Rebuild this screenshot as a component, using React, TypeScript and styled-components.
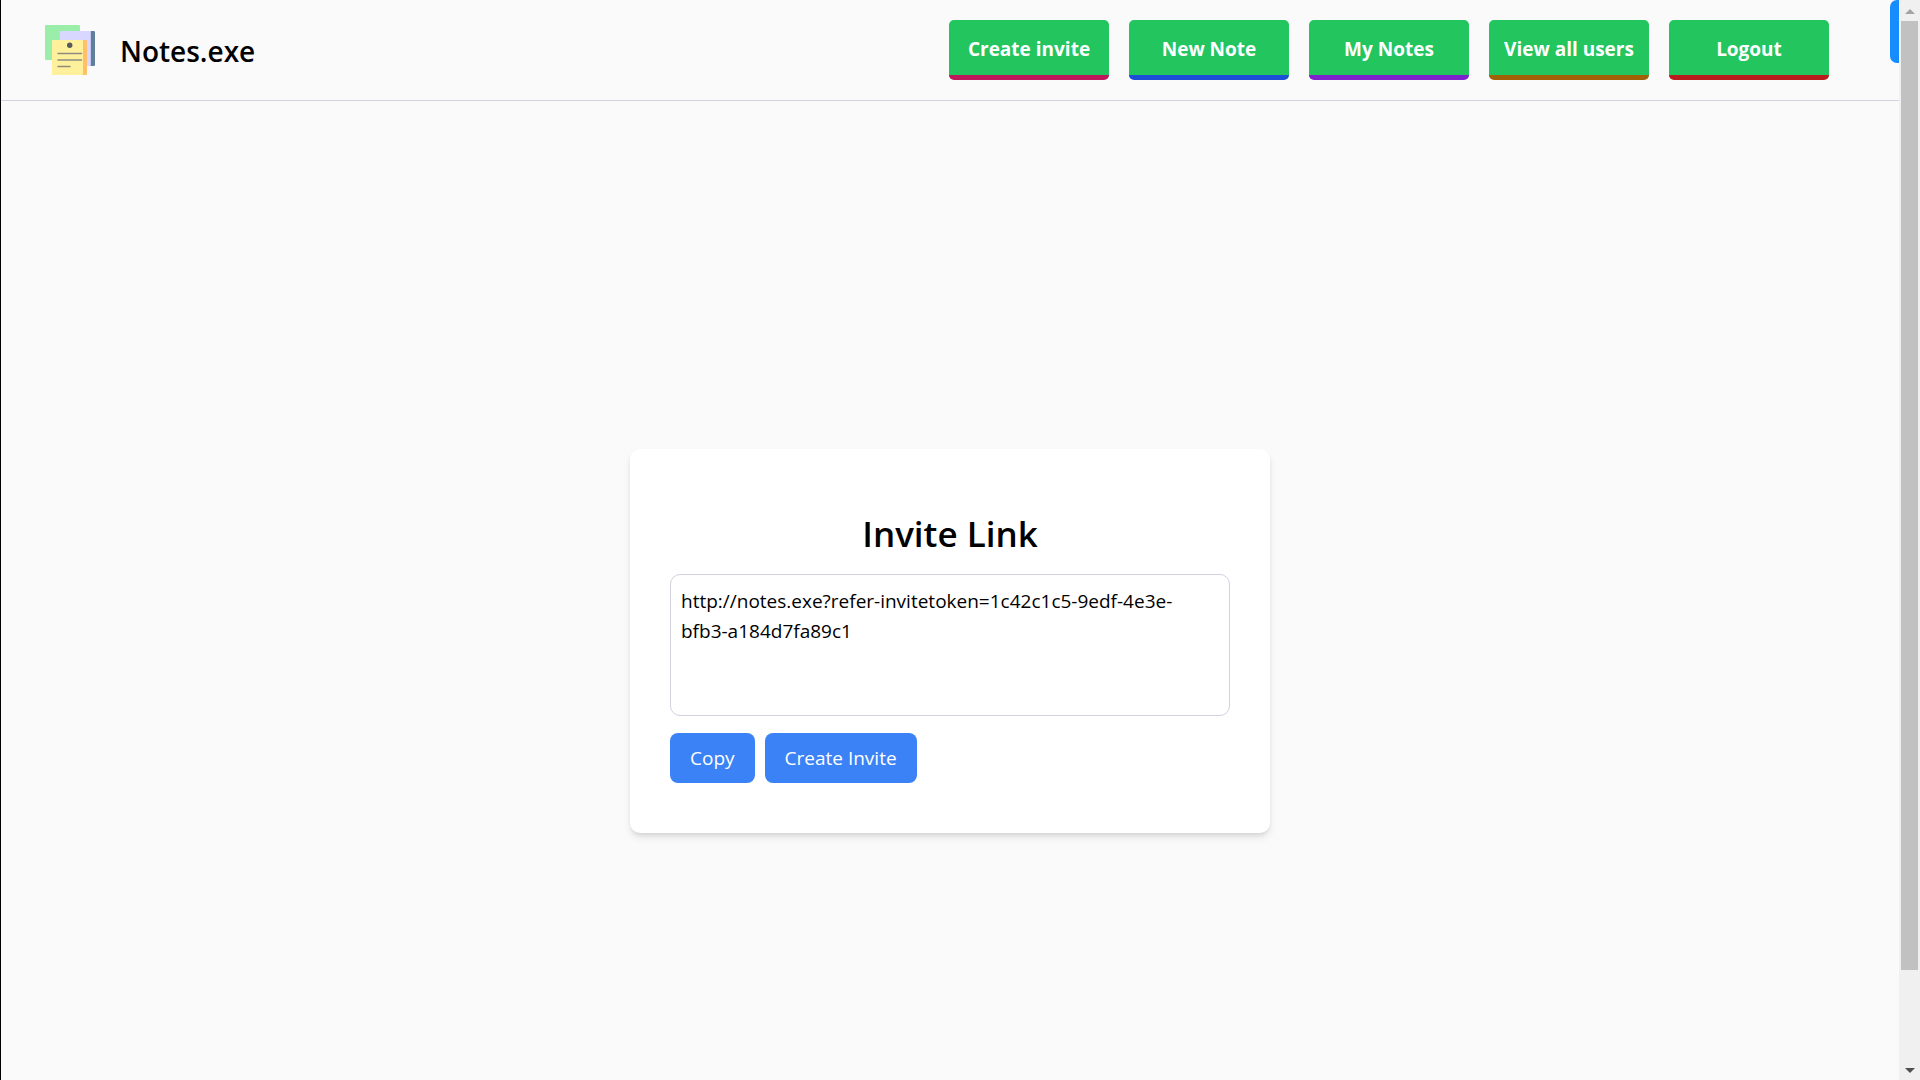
import React, { useState } from "react";
import styled, { createGlobalStyle } from "styled-components";

const GlobalStyle = createGlobalStyle`
  *, *::before, *::after { box-sizing: border-box; }
  body {
    margin: 0;
    background: #fafafa;
    color: #000;
    font-family: "Open Sans", "Noto Sans", sans-serif;
    font-size: 19px;
    line-height: 30px;
  }
  button, textarea { font: inherit; }
`;

const Frame = styled.div`
  display: flex;
  height: 100vh;
  overflow: hidden;
`;

const Page = styled.div`
  flex: 1;
  min-width: 0;
  overflow: hidden;
  border-left: 1px solid #000;
`;

const Header = styled.header`
  display: flex;
  align-items: flex-start;
  border-bottom: 1px solid #d1d3e0;
`;

const TopBar = styled.div`
  flex: 1;
  display: flex;
  align-items: center;
  justify-content: space-between;
  padding: 20px 61px 20px 44px;
`;

const Brand = styled.a`
  display: flex;
  align-items: center;
  gap: 25px;
  color: inherit;
  text-decoration: none;
  font-size: 28px;
  font-weight: 600;
  line-height: 40px;
`;

const BrandName = styled.span`
  padding-top: 2px;
`;

const Nav = styled.nav`
  display: flex;
  gap: 20px;
`;

const NavButton = styled.button<{ $edge: string }>`
  width: 160px;
  height: 60px;
  padding: 2px 0 0;
  border: 0;
  border-bottom: 5px solid ${(p) => p.$edge};
  border-radius: 5px;
  background: #22c55e;
  color: #fff;
  font-size: 19px;
  font-weight: 700;
  white-space: nowrap;
  cursor: pointer;
`;

const SideTab = styled.button`
  width: 9px;
  height: 63px;
  margin-bottom: -63px;
  padding: 0;
  border: 0;
  border-radius: 7px 0 0 7px;
  background: #168cff;
  cursor: pointer;
`;

const Main = styled.main`
  display: flex;
  align-items: center;
  justify-content: center;
  min-height: 100vh;
`;

const Card = styled.section`
  display: flex;
  flex-direction: column;
  width: 640px;
  padding: 60px 40px 50px;
  border-radius: 10px;
  background: #fff;
  box-shadow: 0 5px 8px -1px rgba(0, 0, 0, 0.1), 0 3px 5px -2px rgba(0, 0, 0, 0.1);
`;

const Title = styled.label`
  margin-bottom: 15px;
  font-size: 35px;
  font-weight: 600;
  line-height: 50px;
  text-align: center;
`;

const LinkBox = styled.textarea`
  display: block;
  width: 100%;
  height: 142px;
  margin: 0 0 17px;
  padding: 11px 30px 11px 10px;
  border: 1px solid #d1d3e0;
  border-radius: 10px;
  background: #fff;
  color: #000;
  resize: none;
  outline: none;
`;

const Actions = styled.div`
  display: flex;
  gap: 10px;
`;

const ActionButton = styled.button`
  padding: 10px 20px;
  border: 0;
  border-radius: 8px;
  background: #3b82f6;
  color: #fff;
  cursor: pointer;
`;

const ScrollBar = styled.aside`
  display: flex;
  flex-direction: column;
  width: 21px;
  padding: 0 2px;
  background: #f0f0f0;
`;

const Arrow = styled.button<{ $color: string }>`
  display: flex;
  align-items: center;
  justify-content: center;
  height: 21px;
  padding: 2px 0 0;
  border: 0;
  background: none;
  color: ${(p) => p.$color};
`;

const Thumb = styled.div`
  flex: 949;
  background: #c1c1c1;
`;

const Rest = styled.div`
  flex: 89;
`;

const Logo = () => (
  <svg width="50" height="50" viewBox="0 0 50 50" aria-hidden="true">
    <rect width="35" height="35" rx="1.3" fill="#9aeeaa" />
    <path d="M16.3 6H47v35H16.3A1.3 1.3 0 0 1 15 39.700V7.300A1.300 1.300 0 0 1 16.300 6Z" fill="#d8d7ff" />
    <path d="M46 6h2.700A1.300 1.300 0 0 1 50 7.300v32.400a1.300 1.300 0 0 1-1.300 1.300H45c.8-.4 1-1 1-2Z" fill="#5e7f99" />
    <path d="M45 41c.8-.4 1-1 1-2V7.500C46 6.700 45.700 6.300 45 6Z" fill="#c4c3f3" />
    <rect x="7" y="15" width="34" height="35" rx="1.300" fill="#fff19c" />
    <path d="M38 15h2.700A1.300 1.300 0 0 1 42 16.300v32.400a1.300 1.300 0 0 1-1.300 1.300H37c.8-.4 1-1 1-2Z" fill="#ffc166" />
    <circle cx="24.700" cy="20.300" r="2.700" fill="#555a5c" />
    <path d="M13 28.400h23.500M13 35.100h23.500M13 41.500h12" stroke="#8c8b80" strokeWidth="1.500" strokeLinecap="round" />
  </svg>
);

const NAV_ITEMS = [
  { label: "Create invite", edge: "#be185d" },
  { label: "New Note", edge: "#1d4ed8" },
  { label: "My Notes", edge: "#7e22ce" },
  { label: "View all users", edge: "#a16207" },
  { label: "Logout", edge: "#b91c1c" },
];

export default function App() {
  const [link, setLink] = useState("http://notes.exe?refer-invitetoken=1c42c1c5-9edf-4e3e-bfb3-a184d7fa89c1");

  return (
    <Frame>
      <GlobalStyle />
      <Page>
        <Header>
          <TopBar>
            <Brand href="#">
              <Logo />
              <BrandName>Notes.exe</BrandName>
            </Brand>
            <Nav>
              {NAV_ITEMS.map((item) => (
                <NavButton key={item.label} type="button" $edge={item.edge}>
                  {item.label}
                </NavButton>
              ))}
            </Nav>
          </TopBar>
          <SideTab type="button" aria-label="Open panel" />
        </Header>
        <Main>
          <Card>
            <Title htmlFor="invite-link">Invite Link</Title>
            <LinkBox
              id="invite-link"
              spellCheck={false}
              value={link}
              onChange={(event) => setLink(event.target.value)}
            />
            <Actions>
              <ActionButton type="button">Copy</ActionButton>
              <ActionButton type="button">Create Invite</ActionButton>
            </Actions>
          </Card>
        </Main>
      </Page>
      <ScrollBar>
        <Arrow type="button" aria-label="Scroll up" $color="#a3a3a3">
          <svg width="10" height="5" viewBox="0 0 10 5">
            <path d="M0 5 5 0l5 5Z" fill="currentColor" />
          </svg>
        </Arrow>
        <Thumb />
        <Rest />
        <Arrow type="button" aria-label="Scroll down" $color="#505050">
          <svg width="10" height="5" viewBox="0 0 10 5">
            <path d="M0 0h10L5 5Z" fill="currentColor" />
          </svg>
        </Arrow>
      </ScrollBar>
    </Frame>
  );
}
